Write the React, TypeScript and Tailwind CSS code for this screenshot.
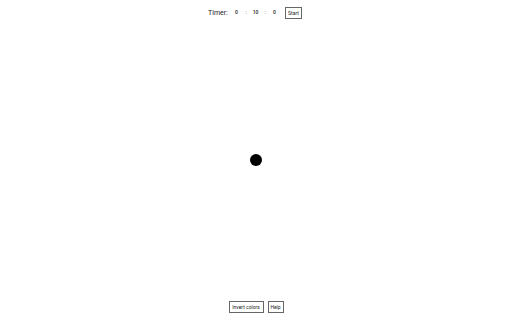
export default function App() {
  return (
    <div className="h-[320px] w-[512px] bg-white flex flex-col text-[#222] font-['Roboto',sans-serif]">
      <div className="h-[26px] flex items-start pt-[7px] pl-[208px]">
        <span className="w-[21px] h-[12px] flex items-center text-[7px] leading-none">Timer:</span>
        <span className="w-[15px] h-[12px] flex items-center justify-center text-[5px] font-medium">0</span>
        <span className="w-[4px] h-[12px] flex items-center justify-center text-[5px]">:</span>
        <span className="w-[15px] h-[12px] flex items-center justify-center text-[5px] font-medium">10</span>
        <span className="w-[4px] h-[12px] flex items-center justify-center text-[5px]">:</span>
        <span className="w-[15px] h-[12px] flex items-center justify-center text-[5px] font-medium">0</span>
        <button className="ml-[3px] h-[12px] w-[17px] border border-[#666] text-[5px] leading-none">Start</button>
      </div>
      <div className="flex-1 flex items-center justify-center">
        <div className="w-[12px] h-[12px] rounded-full bg-black" />
      </div>
      <div className="h-[26px] flex items-end justify-center gap-[4px] pb-[7px]">
        <button className="h-[12px] w-[35px] border border-[#666] text-[5px] leading-none">Invert colors</button>
        <button className="h-[12px] w-[16px] border border-[#666] text-[5px] leading-none">Help</button>
      </div>
    </div>
  );
}
